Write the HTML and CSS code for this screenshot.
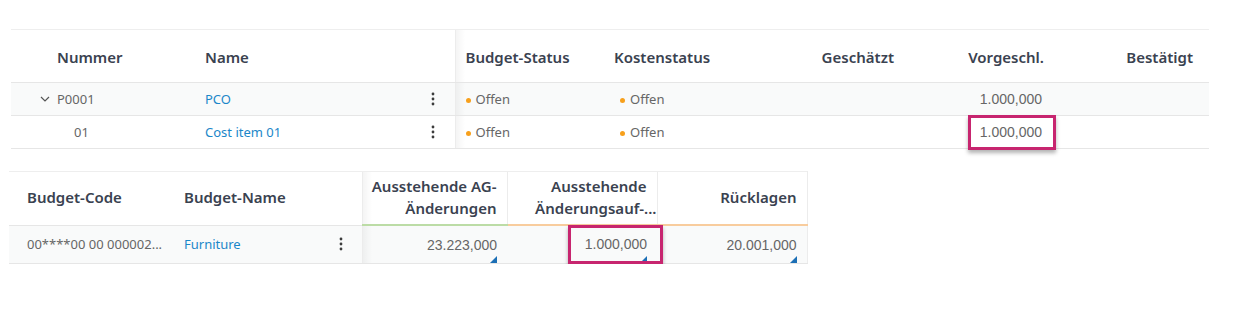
FILE: index.html
```html
<!DOCTYPE html>
<html lang="de">
<head>
  <meta charset="UTF-8">
  <title>Budget-Übersicht</title>
  <link rel="stylesheet" href="styles.css">
</head>
<body>
  <table class="grid grid-changes">
    <colgroup>
      <col style="width:179px"><col style="width:265px"><col style="width:145px"><col style="width:150px">
      <col style="width:155px"><col style="width:150px"><col style="width:154px">
    </colgroup>
    <thead>
      <tr>
        <th class="col-num">Nummer</th>
        <th class="col-name">Name</th>
        <th class="col-status pinned-edge">Budget-Status</th>
        <th class="col-status2">Kostenstatus</th>
        <th class="num">Geschätzt</th>
        <th class="num">Vorgeschl.</th>
        <th class="num num-last">Bestätigt</th>
      </tr>
    </thead>
    <tbody>
      <tr class="row-tint">
        <td class="col-num">
          <svg class="chevron" width="10" height="6" viewBox="0 0 10 6"><polyline points="1,1 5,5 9,1" fill="none" stroke="#555" stroke-width="1.2"/></svg>P0001
        </td>
        <td class="col-name"><a class="link">PCO</a><span class="kebab"><svg width="4" height="14" viewBox="0 0 4 14"><circle cx="2" cy="2" r="1.4"/><circle cx="2" cy="7" r="1.4"/><circle cx="2" cy="12" r="1.4"/></svg></span></td>
        <td class="col-status pinned-edge"><span class="dot"></span>Offen</td>
        <td class="col-status2"><span class="dot"></span>Offen</td>
        <td class="num"></td>
        <td class="num value">1.000,000</td>
        <td class="num num-last"></td>
      </tr>
      <tr>
        <td class="col-num sub">01</td>
        <td class="col-name"><a class="link">Cost item 01</a><span class="kebab"><svg width="4" height="14" viewBox="0 0 4 14"><circle cx="2" cy="2" r="1.4"/><circle cx="2" cy="7" r="1.4"/><circle cx="2" cy="12" r="1.4"/></svg></span></td>
        <td class="col-status pinned-edge"><span class="dot"></span>Offen</td>
        <td class="col-status2"><span class="dot"></span>Offen</td>
        <td class="num"></td>
        <td class="num value"><span class="mark mark-a">1.000,000</span></td>
        <td class="num num-last"></td>
      </tr>
    </tbody>
  </table>

  <table class="grid grid-budget">
    <colgroup>
      <col style="width:161px"><col style="width:192px"><col style="width:145px"><col style="width:150px"><col style="width:150px">
    </colgroup>
    <thead>
      <tr>
        <th class="col-code">Budget-Code</th>
        <th class="col-bname">Budget-Name</th>
        <th class="num pinned-edge line-green">Ausstehende AG-<br>Änderungen</th>
        <th class="num line-orange sep">Ausstehende<br><span class="over">Änderungsauf-...</span></th>
        <th class="num line-orange sep sep-end">Rücklagen</th>
      </tr>
    </thead>
    <tbody>
      <tr class="row-tint">
        <td class="col-code code">00****00 00 000002...</td>
        <td class="col-bname"><a class="link">Furniture</a><span class="kebab"><svg width="4" height="14" viewBox="0 0 4 14"><circle cx="2" cy="2" r="1.4"/><circle cx="2" cy="7" r="1.4"/><circle cx="2" cy="12" r="1.4"/></svg></span></td>
        <td class="num value pinned-edge flag">23.223,000</td>
        <td class="num value flag"><span class="mark mark-b">1.000,000</span></td>
        <td class="num value flag sep-end">20.001,000</td>
      </tr>
    </tbody>
  </table>
</body>
</html>
```

FILE: styles.css
```css
body {
  margin: 0;
  background: #fff;
  font-family: "Noto Sans", "Open Sans", sans-serif;
  color: #3c3c3c;
}

.grid {
  border-collapse: collapse;
  table-layout: fixed;
}
.grid-changes {
  width: 1198px;
  margin: 29px 0 0 11px;
}
.grid-budget {
  width: 798px;
  margin: 22px 0 0 9px;
}

.grid th {
  font-size: 15px;
  font-weight: 600;
  color: #3a4250;
  text-align: left;
  height: 50px;
  padding: 2px 0 0;
  border-top: 1px solid #eeeeee;
  border-bottom: 1px solid #e6e6e6;
  line-height: 22px;
}
.grid-budget th { padding: 0 0 2px; }
.grid td {
  font-size: 13px;
  color: #666;
  height: 32px;
  padding: 0;
  border-bottom: 1px solid #e6e6e6;
  white-space: nowrap;
}
.grid-budget td { height: 37px; }
.row-tint td { background-color: #f9fafa; }

.col-num { padding-left: 46px !important; }
.col-num.sub { padding-left: 63px !important; }
.chevron {
  margin-left: -17px;
  margin-right: 7px;
  vertical-align: 2px;
}
.col-name { padding-left: 15px !important; }
.col-status { padding-left: 10px !important; }
.col-status2 { padding-left: 14px !important; }
td.col-status2 { padding-left: 20px !important; }
.col-code { padding-left: 18px !important; }
.col-bname { padding-left: 14px !important; }

.num {
  text-align: right !important;
  padding-right: 11px !important;
}
.num-last { padding-right: 16px !important; }
td.num { padding-right: 13px !important; }
.grid-budget .num { padding-right: 10px !important; }

.grid td.value {
  font-family: "Liberation Sans", Arial, sans-serif;
  font-size: 14px;
  color: #666;
}

.link {
  color: #1b87c9;
  text-decoration: none;
}

.kebab {
  float: right;
  margin-right: 20px;
  line-height: 0;
  padding-top: 2px;
}
.kebab svg { fill: #3c3c3c; }
.grid-budget .kebab { margin-right: 19px; }

.dot {
  display: inline-block;
  width: 5px;
  height: 5px;
  border-radius: 50%;
  background: #f7a01c;
  margin-right: 5px;
  vertical-align: 1px;
}

.pinned-edge {
  border-left: 1px solid #ececec;
  background-image: linear-gradient(to right, rgba(0, 0, 0, 0.045), rgba(0, 0, 0, 0) 9px);
  background-repeat: no-repeat;
}

.line-green { border-bottom: 2px solid #bcdca6 !important; }
.line-orange { border-bottom: 2px solid #f8cc9d !important; }
.sep { border-left: 1px solid #ececec; }
.sep-end { border-right: 1px solid #ececec; }
.over { margin-right: -10px; }

.code { color: #666; }

.flag { position: relative; }
.flag::after {
  content: "";
  position: absolute;
  right: 10px;
  bottom: 0;
  border-style: solid;
  border-width: 0 0 7px 7px;
  border-color: transparent transparent #1c6fb5 transparent;
}

.mark {
  display: inline-block;
  border: 3px solid #c7256f;
  box-shadow: 0 3px 4px rgba(0, 0, 0, 0.3);
  line-height: 16px;
  position: relative;
  z-index: 1;
}
.mark-a {
  padding: 6px 11px 7px 9px;
  margin: -10px -14px -10px 0;
}
.mark-b {
  padding: 8px 13px 9px 14px;
  margin: -10px -16px -10px 0;
}
```
